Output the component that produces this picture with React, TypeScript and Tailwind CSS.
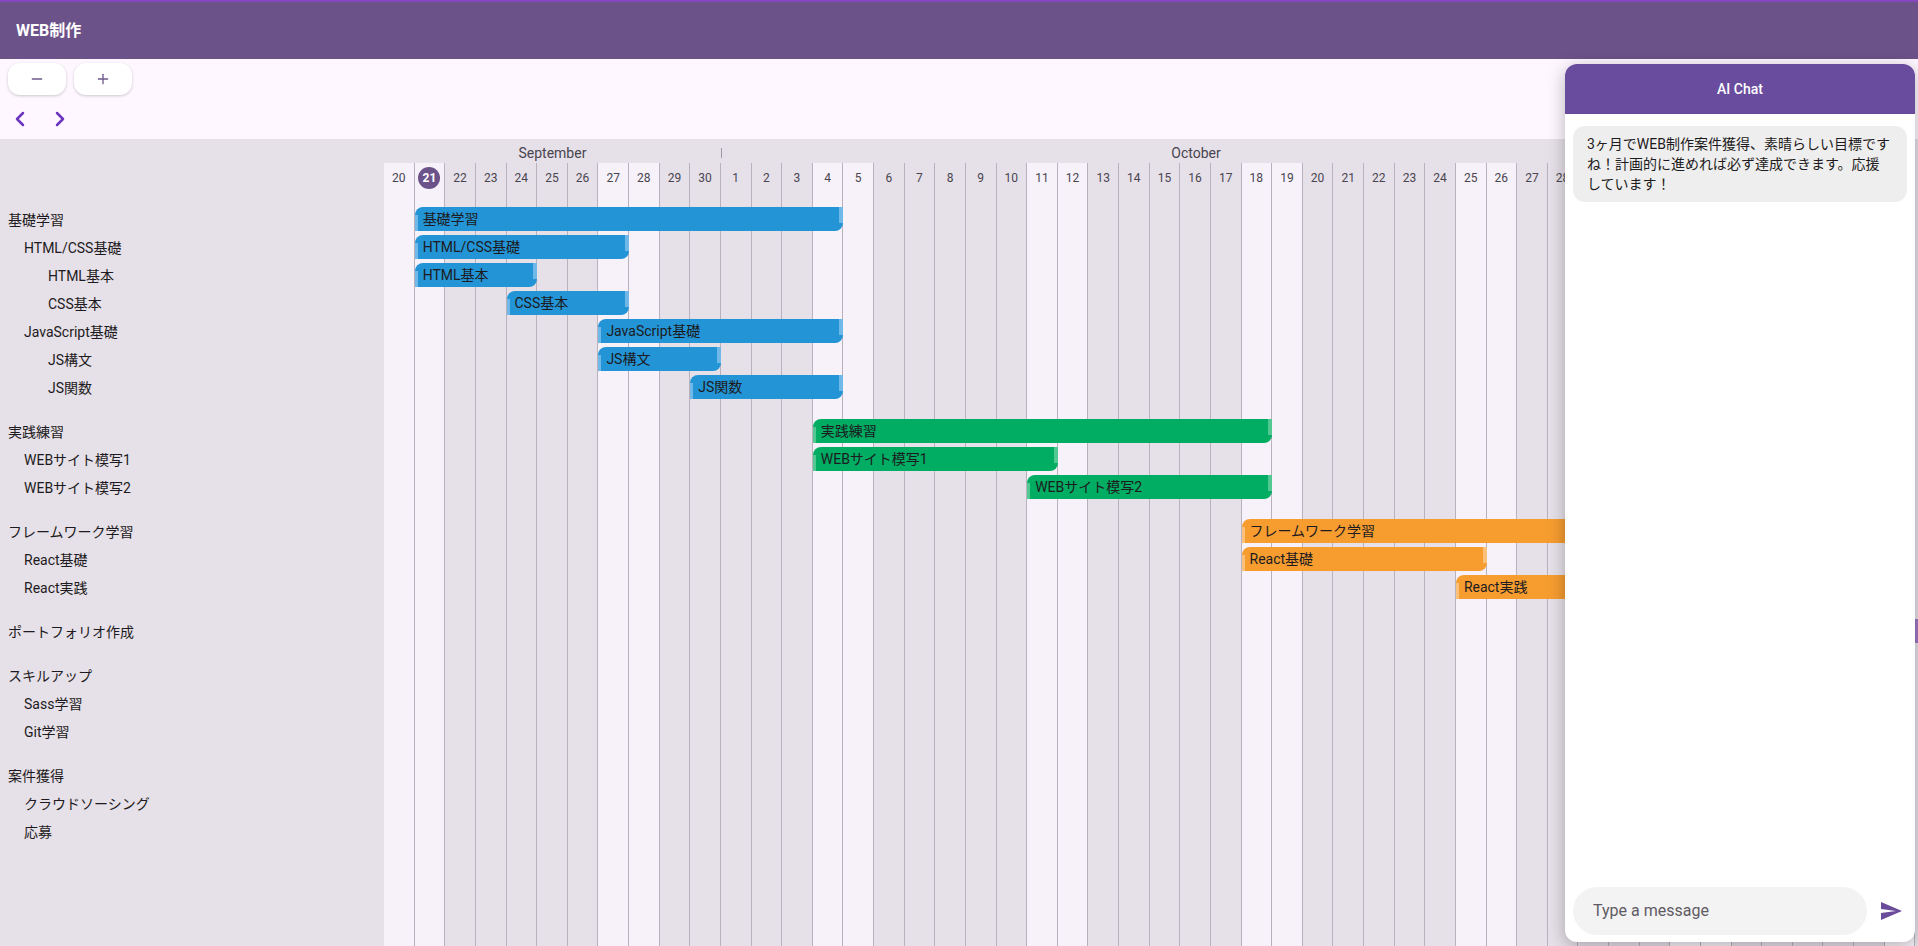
import { Minus, Plus, ChevronLeft, ChevronRight } from 'lucide-react';

type BarColor = 'blue' | 'green' | 'orange';
type Task = { name: string; level: number; start?: number; end?: number; color?: BarColor };

// start / end are day indexes from Sep 20
const groups: Task[][] = [
  [
    { name: '基礎学習', level: 0, start: 1, end: 14, color: 'blue' },
    { name: 'HTML/CSS基礎', level: 1, start: 1, end: 7, color: 'blue' },
    { name: 'HTML基本', level: 2, start: 1, end: 4, color: 'blue' },
    { name: 'CSS基本', level: 2, start: 4, end: 7, color: 'blue' },
    { name: 'JavaScript基礎', level: 1, start: 7, end: 14, color: 'blue' },
    { name: 'JS構文', level: 2, start: 7, end: 10, color: 'blue' },
    { name: 'JS関数', level: 2, start: 10, end: 14, color: 'blue' },
  ],
  [
    { name: '実践練習', level: 0, start: 14, end: 28, color: 'green' },
    { name: 'WEBサイト模写1', level: 1, start: 14, end: 21, color: 'green' },
    { name: 'WEBサイト模写2', level: 1, start: 21, end: 28, color: 'green' },
  ],
  [
    { name: 'フレームワーク学習', level: 0, start: 28, end: 49, color: 'orange' },
    { name: 'React基礎', level: 1, start: 28, end: 35, color: 'orange' },
    { name: 'React実践', level: 1, start: 35, end: 49, color: 'orange' },
  ],
  [{ name: 'ポートフォリオ作成', level: 0 }],
  [
    { name: 'スキルアップ', level: 0 },
    { name: 'Sass学習', level: 1 },
    { name: 'Git学習', level: 1 },
  ],
  [
    { name: '案件獲得', level: 0 },
    { name: 'クラウドソーシング', level: 1 },
    { name: '応募', level: 1 },
  ],
];

const barColors = {
  blue: { bg: 'bg-[#2394d6]', handle: 'bg-[#70b8e7]' },
  green: { bg: 'bg-[#00ad63]', handle: 'bg-[#52c893]' },
  orange: { bg: 'bg-[#f79d30]', handle: 'bg-[#fbc079]' },
};

const indent = ['pl-2', 'pl-6', 'pl-12'];

const days = Array.from({ length: 50 }, (_, i) => {
  const d = new Date(2025, 8, 20 + i);
  return { day: d.getDate(), weekend: d.getDay() === 0 || d.getDay() === 6, today: i === 1 };
});

const months = [
  { name: 'September', span: 11 },
  { name: 'October', span: 31 },
  { name: 'November', span: 8 },
];

const Bar = ({ task }: { task: Task }) => {
  const c = barColors[task.color!];
  return (
    <div
      style={{ gridColumn: `${task.start! + 1} / ${task.end! + 2}` }}
      className={`relative h-6 rounded-tl-lg rounded-br-lg ${c.bg} pl-2 text-sm leading-6 text-[#1d1b20] whitespace-nowrap overflow-hidden`}
    >
      <div className={`absolute left-0 top-2 bottom-0 w-[3px] ${c.handle}`} />
      <div className={`absolute right-0 top-0 bottom-2 w-1 ${c.handle}`} />
      {task.name}
    </div>
  );
};

export default function App() {
  return (
    <div className="relative flex h-screen w-full flex-col overflow-hidden bg-[#e6e0e9] font-['Roboto','Noto_Sans_CJK_JP',sans-serif]">
      {/* app bar */}
      <header className="flex h-[59px] shrink-0 items-center border-t-2 border-[#8447c0] bg-[#6b5289] px-4 text-base font-bold text-white">
        WEB制作
      </header>

      {/* toolbar */}
      <div className="shrink-0 bg-[#fef7ff] pt-1">
        <div className="flex gap-2 px-2">
          <button className="flex h-8 w-[58px] items-center justify-center rounded-xl bg-white shadow-[0_1px_3px_rgba(0,0,0,0.2)]">
            <Minus size={16} strokeWidth={2} className="text-[#6f5a8a]" />
          </button>
          <button className="flex h-8 w-[58px] items-center justify-center rounded-xl bg-white shadow-[0_1px_3px_rgba(0,0,0,0.2)]">
            <Plus size={16} strokeWidth={2} className="text-[#6f5a8a]" />
          </button>
        </div>
        <div className="mt-1 flex h-10">
          <button className="flex w-10 items-center justify-center text-[#6b35c0]">
            <ChevronLeft size={24} strokeWidth={2.5} />
          </button>
          <button className="flex w-10 items-center justify-center text-[#6b35c0]">
            <ChevronRight size={24} strokeWidth={2.5} />
          </button>
        </div>
      </div>

      {/* gantt */}
      <div className="flex min-h-0 flex-1">
        <div className="w-[384px] shrink-0 pt-[66px] text-sm text-[#1d1b20]">
          {groups.map((g, gi) => (
            <div key={gi} className={gi > 0 ? 'mt-4' : ''}>
              {g.map((t) => (
                <div key={t.name} className={`h-7 pt-[3px] leading-6 whitespace-nowrap ${indent[t.level]}`}>
                  {t.name}
                </div>
              ))}
            </div>
          ))}
        </div>

        <div className="flex min-w-0 flex-1 flex-col overflow-hidden">
          <div className="grid h-6 shrink-0 grid-cols-[repeat(50,30.64px)] text-sm text-[#49454f]">
            {months.map((m, i) => (
              <div key={m.name} style={{ gridColumn: `span ${m.span}` }} className="flex items-center pt-[3px]">
                {i > 0 && <div className="h-[10px] w-px bg-[#9e98a2]" />}
                <div className="flex-1 text-center">{m.name}</div>
              </div>
            ))}
          </div>

          <div className="grid min-h-0 flex-1">
            {/* day columns */}
            <div className="flex [grid-area:1/1]">
              {days.map((d, i) => (
                <div
                  key={i}
                  className={`h-full w-[30.64px] shrink-0 border-r border-[#b9b2bc] ${d.weekend ? 'bg-[#f7f2fa]' : 'bg-[#e6e0e9]'}`}
                >
                  <div className="flex h-[42px] justify-center pt-1 text-xs text-[#49454f]">
                    {d.today ? (
                      <div className="flex h-[22px] w-[22px] items-center justify-center rounded-full bg-[#6b5289] font-bold text-white">
                        {d.day}
                      </div>
                    ) : (
                      <div className="flex h-[22px] items-center">{d.day}</div>
                    )}
                  </div>
                </div>
              ))}
            </div>

            {/* task rows */}
            <div className="pt-[42px] [grid-area:1/1]">
              {groups.map((g, gi) => (
                <div key={gi} className={gi > 0 ? 'mt-4' : ''}>
                  {g.map((t) => (
                    <div key={t.name} className="grid h-7 grid-cols-[repeat(50,30.64px)] items-center">
                      {t.color && <Bar task={t} />}
                    </div>
                  ))}
                </div>
              ))}
            </div>
          </div>
        </div>
      </div>

      {/* right edge tab */}
      <div className="absolute right-0 top-[619px] h-6 w-[3px] bg-[#a077c4]" />

      {/* chat panel */}
      <div className="absolute right-[3px] top-16 bottom-1 flex w-[350px] flex-col overflow-hidden rounded-xl bg-white shadow-[0_4px_18px_rgba(0,0,0,0.28)]">
        <div className="flex h-[50px] shrink-0 items-center justify-center bg-[#6a4c9e] text-sm font-medium text-white">
          AI Chat
        </div>
        <div className="flex-1 px-2 pt-3">
          <div className="rounded-xl bg-[#eeeeee] px-[14px] py-2 text-sm leading-5 text-[#1d1b20]">
            3ヶ月でWEB制作案件獲得、素晴らしい目標ですね！計画的に進めれば必ず達成できます。応援しています！
          </div>
        </div>
        <div className="flex items-center pb-[7px] pl-2">
          <div className="flex h-12 flex-1 items-center rounded-3xl bg-[#f3f3f3] pl-5 text-base text-[#5f5b63]">
            Type a message
          </div>
          <button className="flex h-12 w-12 items-center justify-center">
            <svg viewBox="0 0 24 24" className="h-6 w-6 fill-[#6b4c9a]">
              <path d="M2.01 21L23 12 2.01 3 2 10l15 2-15 2z" />
            </svg>
          </button>
        </div>
      </div>
    </div>
  );
}
